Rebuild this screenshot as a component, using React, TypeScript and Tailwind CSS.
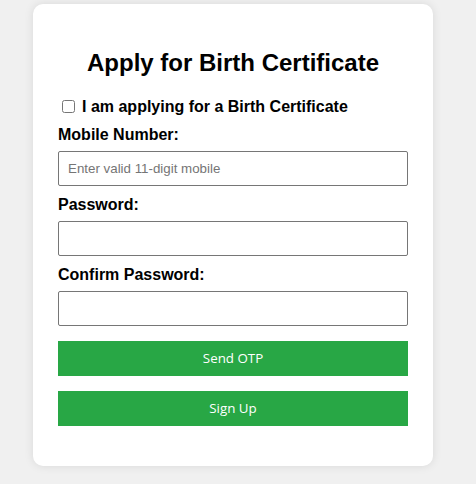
export default function App() {
  return (
    <div className="min-h-[484px] bg-[#f0f0f0] pt-[4px] font-['Liberation_Sans',Arial,sans-serif] text-black">
      <div className="ml-[33px] w-[400px] h-[462px] rounded-[10px] bg-white px-[25px] pt-[25px] pb-[40px] shadow-[0_0_10px_rgba(0,0,0,0.1)]">
        <h2 className="mt-[20px] mb-[20px] h-[28px] text-center text-[24px] leading-[28px] font-bold">
          Apply for Birth Certificate
        </h2>

        <label className="flex h-[19px] items-center text-[16px] leading-[18px] font-bold">
          <input type="checkbox" className="mt-0 mb-0 ml-[4px] mr-[7px] h-[13px] w-[13px]" />
          I am applying for a Birth Certificate
        </label>

        <label className="mt-[10px] mb-[7px] block text-[16px] leading-[18px] font-bold">Mobile Number:</label>
        <input
          type="text"
          placeholder="Enter valid 11-digit mobile"
          className="block h-[35px] w-full rounded-[2px] border border-[#767676] px-[9px] text-[13.33px] placeholder:text-[#757575] outline-none"
        />

        <label className="mt-[10px] mb-[7px] block text-[16px] leading-[18px] font-bold">Password:</label>
        <input
          type="password"
          className="block h-[35px] w-full rounded-[2px] border border-[#767676] px-[9px] text-[13.33px] outline-none"
        />

        <label className="mt-[10px] mb-[7px] block text-[16px] leading-[18px] font-bold">Confirm Password:</label>
        <input
          type="password"
          className="block h-[35px] w-full rounded-[2px] border border-[#767676] px-[9px] text-[13.33px] outline-none"
        />

        <button className="mt-[15px] block h-[35px] w-full bg-[#28a745] text-center font-['Open_Sans',sans-serif] text-[13.33px] text-white">
          Send OTP
        </button>
        <button className="mt-[15px] block h-[35px] w-full bg-[#28a745] text-center font-['Open_Sans',sans-serif] text-[13.33px] text-white">
          Sign Up
        </button>
      </div>
    </div>
  );
}
